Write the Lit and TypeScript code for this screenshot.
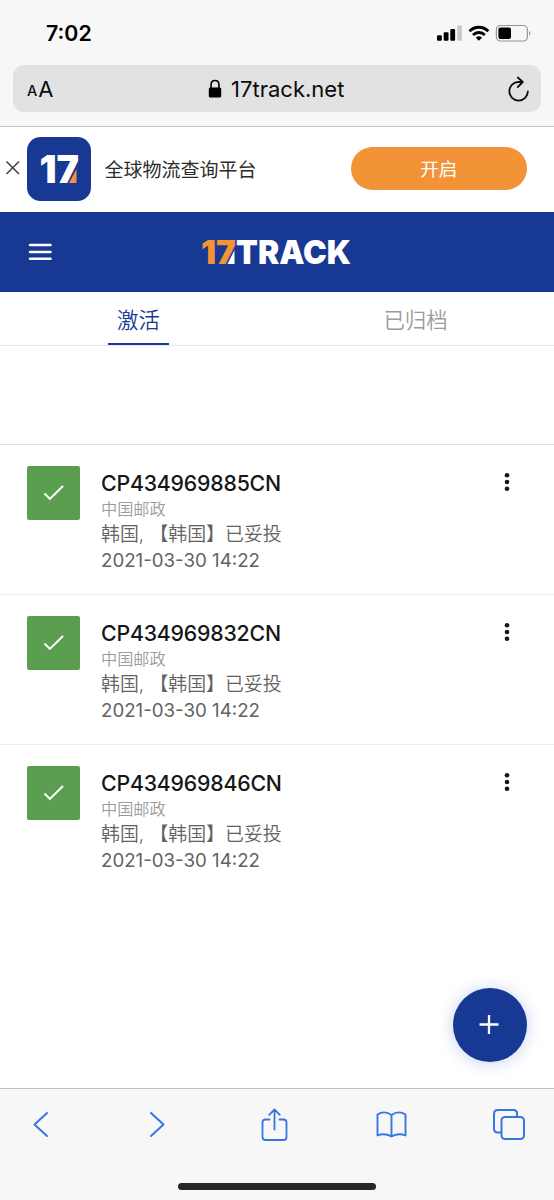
import { LitElement, html, svg, css } from "lit";
import { customElement, property } from "lit/decorators.js";

@customElement("track-item")
class TrackItem extends LitElement {
  @property() number = "";
  static styles = css`
    :host { display: flex; box-sizing: border-box; height: 150px; padding: 21px 27px 0; border-bottom: 1px solid #ececec; }
    :host(:last-of-type) { border-bottom-color: transparent; }
    .state { flex: none; width: 53px; height: 54px; border-radius: 2px; background: #5c9e50; }
    .body { flex: 1; margin-left: 21px; white-space: nowrap; }
    .number { font-size: 21.3px; line-height: 34px; font-weight: 500; letter-spacing: -0.2px; color: #161616; }
    .carrier { font-size: 16.2px; line-height: 18px; color: #9b9b9b; font-weight: 350; }
    .event { font-size: 18.9px; line-height: 34px; color: #626262; font-weight: 350; }
    .time { font-size: 18.7px; line-height: 18px; color: #626262; }
    .more { flex: none; width: 6px; height: 20px; margin: 5.5px 17px 0 0; }
  `;
  render() {
    return html`
      <svg class="state" viewBox="0 0 53 54"><path d="M17.5 27.5l5.4 5.4L36 20" fill="none" stroke="#fff" stroke-width="2" /></svg>
      <div class="body">
        <div class="number">${this.number}</div>
        <div class="carrier">中国邮政</div>
        <div class="event">韩国, 【韩国】已妥投</div>
        <div class="time">2021-03-30 14:22</div>
      </div>
      <svg class="more" viewBox="0 0 6 20" fill="#161616">
        ${[3.3, 10, 16.7].map((y) => svg`<circle cx="3" cy=${y} r="2.3" />`)}
      </svg>
    `;
  }
}

@customElement("app-root")
class AppRoot extends LitElement {
  static styles = css`
    :host { position: relative; display: flex; flex-direction: column; width: 554px; height: 1200px; overflow: hidden; background: #fff; font-family: Inter, "Noto Sans CJK SC", sans-serif; color: #111; }
    svg { display: block; flex: none; }
    .chrome { box-sizing: border-box; height: 127px; background: #f7f7f7; border-bottom: 1px solid #c6c6c6; padding: 0 13px; }
    .status { display: flex; align-items: center; height: 65px; padding: 0 8px 0 33px; box-sizing: border-box; }
    .clock { flex: 1; font-size: 21.3px; font-weight: 600; color: #000; }
    .address { display: flex; align-items: center; height: 47px; border-radius: 11px; background: #e2e2e2; color: #0c0c0c; padding: 0 11px 0 14px; }
    .small-a { font-size: 14.5px; font-weight: 500; line-height: 24px; padding-top: 5px; }
    .large-a { font-size: 22px; line-height: 24px; margin-left: 1px; }
    .site { flex: 1; display: flex; align-items: center; justify-content: center; font-size: 22px; gap: 9px; padding-right: 7px; }
    .banner { display: flex; align-items: center; height: 84.5px; flex: none; padding: 0 27px 0 5px; }
    .app-icon { margin-left: 6px; }
    .slogan { flex: 1; font-size: 19px; margin-left: 13.5px; padding-bottom: 2px; color: #2c2c2c; }
    .open { width: 176.5px; height: 43px; line-height: 44px; margin-bottom: 1px; border-radius: 22px; background: #f19336; color: #fff; text-align: center; font-size: 18.6px; }
    .nav { display: flex; align-items: center; flex: none; height: 80.5px; background: #173994; padding-left: 28px; }
    .logo { margin-left: 148px; overflow: visible; }
    .tabs { display: flex; box-sizing: border-box; height: 54px; flex: none; border-bottom: 1px solid #e8e8e8; }
    .tab { flex: 1; display: flex; justify-content: center; color: #9b9b9b; font-size: 21.4px; line-height: 56px; font-weight: 350; }
    .tab span { height: 51px; }
    .tab.active { color: #173994; }
    .tab.active span { padding: 0 9px; border-bottom: 2px solid #173994; }
    .notice { box-sizing: border-box; height: 99px; flex: none; border-bottom: 1px solid #dedede; }
    .list { flex: 1; }
    .add { position: absolute; left: 453px; top: 988px; width: 74px; height: 74px; border-radius: 50%; background: #173994; box-shadow: 0 1px 16px rgba(23, 75, 180, 0.25); }
    .toolbar { box-sizing: border-box; height: 112px; flex: none; background: #f7f7f7; border-top: 1px solid #bfbfbf; }
    .tools { display: flex; justify-content: space-between; align-items: center; height: 72px; padding: 0 28px 0 24px; fill: none; stroke: #3576e3; stroke-width: 2; stroke-linecap: round; stroke-linejoin: round; }
    .home { width: 198px; height: 7px; border-radius: 4px; margin: 22px auto 0 178px; background: #272727; }
  `;
  render() {
    return html`
      <div class="chrome">
        <div class="status">
          <div class="clock">7:02</div>
          <svg width="96" height="20" viewBox="0 0 96 20">
            <rect x="0" y="12.2" width="4.8" height="5.6" rx="1" />
            <rect x="6.7" y="9.2" width="4.8" height="8.6" rx="1" />
            <rect x="13.3" y="6" width="4.8" height="11.8" rx="1" />
            <rect x="20.2" y="2.5" width="4.8" height="15.3" rx="1" fill="#c9c9c9" />
            <g fill="none" stroke="#000" stroke-width="2.9">
              <path d="M32.5 8.2a13.2 13.2 0 0 1 18.8 0" />
              <path d="M36 12a8.3 8.3 0 0 1 11.8 0" />
            </g>
            <path d="M38.8 14.7a4.5 4.5 0 0 1 6.2 0L41.9 17.8z" />
            <rect x="59.4" y="2.5" width="31" height="15.5" rx="4" fill="none" stroke="#969696" stroke-width="1.2" />
            <rect x="61.4" y="4.4" width="12.6" height="11.7" rx="2" />
            <path d="M92.2 7.7q2.4 2.5 0 5z" fill="#8c8c8c" />
          </svg>
        </div>
        <div class="address">
          <span class="small-a">A</span><span class="large-a">A</span>
          <div class="site">
            <svg width="14" height="20" viewBox="0 0 14 20"><rect x="0.8" y="8.5" width="12.4" height="10" rx="1.5" /><path d="M3 9V6q0-4.5 4-4.5T11 6v3" fill="none" stroke="#000" stroke-width="1.6" /></svg>
            <span>17track.net</span>
          </div>
          <svg width="24" height="26" viewBox="0 0 24 26" fill="none" stroke="#0c0c0c" stroke-width="1.8" stroke-linecap="round" stroke-linejoin="round"><path d="M16.500 6H12.600A9.300 9.300 0 1 0 21.900 15.300M11.800 1.500l5 4.500-5 5" /></svg>
        </div>
      </div>
      <div class="banner">
        <svg width="16" height="16" viewBox="0 0 16 16" stroke="#444" stroke-width="1.5"><path d="M1.500 0.500l12.500 12.500M14 0.500L1.500 13" /></svg>
        <svg class="app-icon" width="64" height="64" viewBox="0 0 64 64">
          <rect width="64" height="64" rx="13.500" fill="#173994" />
          <text x="12.500" y="45.500" font-family="Inter" font-weight="900" font-size="38.500" textLength="39.500" lengthAdjust="spacingAndGlyphs" fill="#fff">17</text>
          <path d="M49.500 32v14h-7.500z" fill="#f19336" />
        </svg>
        <div class="slogan">全球物流查询平台</div>
        <div class="open">开启</div>
      </div>
      <div class="nav">
        <svg width="24" height="18" viewBox="0 0 24 18" stroke="#fff" stroke-width="2.500" stroke-linecap="round"><path d="M2 2h20.500M2 9h20.500M2 15.700h20.500" /></svg>
        <svg class="logo" width="152" height="48" viewBox="0 0 152 48" font-family="Inter" font-weight="900" font-size="33">
          <path d="M34.500 22v14h-7z" fill="#fff" />
          <text x="1" y="36" textLength="35" lengthAdjust="spacingAndGlyphs" fill="#f19336">17</text>
          <text x="36" y="36" textLength="115" lengthAdjust="spacingAndGlyphs" fill="#fff">TRACK</text>
        </svg>
      </div>
      <div class="tabs">
        <div class="tab active"><span>激活</span></div>
        <div class="tab"><span>已归档</span></div>
      </div>
      <div class="notice"></div>
      <div class="list">
        ${["CP434969885CN", "CP434969832CN", "CP434969846CN"].map((n) => html`<track-item .number=${n}></track-item>`)}
      </div>
      <div class="toolbar">
        <div class="tools">
          <svg width="34" height="34" viewBox="0 0 34 34"><path d="M23 5L10.500 16.500 23 28" /></svg>
          <svg width="34" height="34" viewBox="0 0 34 34"><path d="M10 5l12.500 11.500L10 28" /></svg>
          <svg width="34" height="36" viewBox="-2.500 0 34 36" stroke-width="1.800"><path d="M9 12.500H5q-3 0-3 3V30q0 3 3 3h18q3 0 3-3V15.500q0-3-3-3h-4M14 22.500V3M8.700 7.800L14 2.500l5.300 5.300" /></svg>
          <svg width="34" height="34" viewBox="0 0 34 34" stroke-width="1.900"><path d="M16.500 7Q9.500 2 2.500 6.500v21Q9.500 24.500 16.500 28.500Q23.500 24.500 30.500 27.500v-21Q23.500 2 16.500 7v21.500" /></svg>
          <svg width="34" height="34" viewBox="0 0 34 34"><path d="M9 24.500H6q-4 0-4-4V6q0-4 4-4h15.500q3.500 0 3.500 3.500v3.500" /><rect x="9.500" y="9" width="22.500" height="22" rx="3.500" /></svg>
        </div>
        <div class="home"></div>
      </div>
      <svg class="add" viewBox="0 0 74 74" stroke="#fff" stroke-width="2.300"><path d="M26.500 36.500h19M36 27v19" /></svg>
    `;
  }
}
